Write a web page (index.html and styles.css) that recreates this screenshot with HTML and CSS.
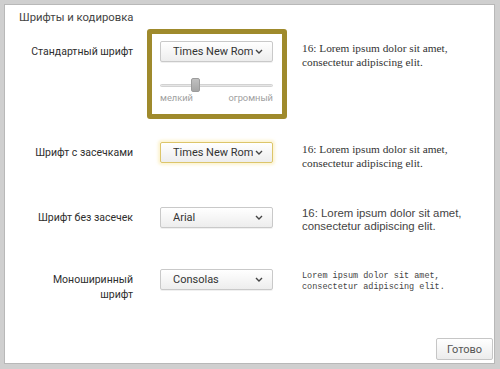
FILE: index.html
```html
<!DOCTYPE html>
<html lang="ru">
<head>
<meta charset="utf-8">
<title>Шрифты и кодировка</title>
<link rel="stylesheet" href="styles.css">
</head>
<body>
<div class="dialog">
  <div class="scroll">
    <div class="title">Шрифты и кодировка</div>
    <div class="rows">
      <div class="row row-main">
        <div class="label">Стандартный шрифт</div>
        <div class="control">
          <div class="select"><span class="value">Times New Roman</span><svg class="chev" width="8" height="5" viewBox="0 0 8 5"><polyline points="1,1 4,4 7,1" fill="none" stroke="#444" stroke-width="1.4"/></svg></div>
          <div class="slider"><div class="track"></div><div class="thumb"></div></div>
          <div class="slider-labels"><span>мелкий</span><span>огромный</span></div>
          <div class="highlight"></div>
        </div>
        <div class="sample serif">16: Lorem ipsum dolor sit amet, consectetur adipiscing elit.</div>
      </div>
      <div class="row">
        <div class="label">Шрифт с засечками</div>
        <div class="control">
          <div class="select focused"><span class="value">Times New Roman</span><svg class="chev" width="8" height="5" viewBox="0 0 8 5"><polyline points="1,1 4,4 7,1" fill="none" stroke="#444" stroke-width="1.4"/></svg></div>
        </div>
        <div class="sample serif">16: Lorem ipsum dolor sit amet, consectetur adipiscing elit.</div>
      </div>
      <div class="row">
        <div class="label">Шрифт без засечек</div>
        <div class="control">
          <div class="select"><span class="value">Arial</span><svg class="chev" width="8" height="5" viewBox="0 0 8 5"><polyline points="1,1 4,4 7,1" fill="none" stroke="#444" stroke-width="1.4"/></svg></div>
        </div>
        <div class="sample sans">16: Lorem ipsum dolor sit amet, consectetur adipiscing elit.</div>
      </div>
      <div class="row">
        <div class="label">Моноширинный<br>шрифт</div>
        <div class="control">
          <div class="select"><span class="value">Consolas</span><svg class="chev" width="8" height="5" viewBox="0 0 8 5"><polyline points="1,1 4,4 7,1" fill="none" stroke="#444" stroke-width="1.4"/></svg></div>
        </div>
        <div class="sample mono">Lorem ipsum dolor sit amet, consectetur adipiscing elit.</div>
      </div>
      <div class="row ghost">
        <div class="ghost-label"><span class="g1"></span><span class="g2"></span></div>
        <div class="ghost-ctrl"><span class="g3"></span></div>
        <div class="ghost-sample"><span class="g4"></span></div>
      </div>
    </div>
  </div>
  <div class="footer">
    <button class="btn">Готово</button>
  </div>
</div>
</body>
</html>
```

FILE: styles.css
```css
html, body {
  margin: 0;
  padding: 0;
}
body {
  width: 500px;
  height: 369px;
  background: #cfcfcf;
  font-family: Roboto, "Noto Sans", sans-serif;
  color: #333;
  overflow: hidden;
}
.dialog {
  box-sizing: border-box;
  margin: 4px 5px 5px 4px;
  height: 360px;
  background: #fff;
  border: 1px solid #b8b8b8;
  display: flex;
  flex-direction: column;
}
.scroll {
  height: 314px;
  overflow: hidden;
  padding: 5px 0 0 14px;
}
.title {
  font-size: 11.3px;
  line-height: 16px;
  color: #444;
}
.rows {
  margin-top: 15px;
  display: flex;
  flex-direction: column;
  gap: 37px;
}
.row {
  display: grid;
  grid-template-columns: 114px 113px 1fr;
  column-gap: 27px;
  align-items: start;
}
.row > .sample {
  margin-left: 2px;
}
.label {
  text-align: right;
  font-size: 10.5px;
  line-height: 15px;
  padding-top: 3px;
  color: #2e2e2e;
}
.control {
  position: relative;
  display: flex;
  flex-direction: column;
}
.select {
  box-sizing: border-box;
  height: 21px;
  border: 1px solid #c9c9c9;
  border-radius: 2px;
  background: linear-gradient(#ffffff, #ededed);
  box-shadow: 0 1px 0 rgba(0,0,0,0.06);
  display: flex;
  align-items: center;
  justify-content: space-between;
  padding: 0 9px 0 12px;
  font-size: 11px;
  color: #333;
}
.select.focused {
  border-color: #dcc56a;
  box-shadow: 0 0 3px 2px rgba(245, 220, 120, 0.35);
}
.value {
  width: 80px;
  overflow: hidden;
  white-space: nowrap;
}
.chev {
  display: block;
  flex: none;
}
.slider {
  position: relative;
  height: 12px;
  margin-top: 17px;
}
.track {
  position: absolute;
  left: 0;
  right: 0;
  top: 5px;
  height: 3px;
  box-sizing: border-box;
  background: #e6e6e6;
  border: 1px solid #d2d2d2;
  border-radius: 2px;
}
.thumb {
  position: absolute;
  left: 31px;
  top: -1px;
  width: 9px;
  height: 14px;
  box-sizing: border-box;
  background: linear-gradient(#c0c0c0, #a6a6a6);
  border: 1px solid #9c9c9c;
  border-radius: 2px;
}
.slider-labels {
  display: flex;
  justify-content: space-between;
  font-size: 9.3px;
  line-height: 14px;
  color: #a0a0a0;
}
.highlight {
  position: absolute;
  left: -13px;
  top: -12px;
  right: -14px;
  bottom: -14px;
  border: 5px solid #9f8a2c;
  border-radius: 3px;
  pointer-events: none;
}
.sample {
  color: #333;
}
.serif {
  font-family: "Liberation Serif", "Times New Roman", serif;
  font-size: 11.3px;
  line-height: 14px;
}
.sans {
  font-family: "Liberation Sans", Arial, sans-serif;
  font-size: 11.4px;
  line-height: 12.5px;
  color: #444;
}
.mono {
  font-family: "Liberation Mono", "DejaVu Sans Mono", monospace;
  font-size: 8.5px;
  line-height: 11px;
  margin-top: 2px;
  color: #444;
}
.ghost {
  height: 6px;
}
.ghost-label, .ghost-ctrl, .ghost-sample {
  display: flex;
  padding-top: 3px;
}
.ghost span {
  display: block;
  height: 0;
  border-top: 1px dotted #d4d4d4;
}
.g1 { width: 12px; margin-left: -3px; }
.g2 { width: 6px; margin-left: 58px; }
.g3 { width: 8px; border-top-style: solid !important; }
.g4 { width: 112px; margin-left: -2px; border-top-style: dashed !important; }
.footer {
  flex: 1;
  display: flex;
  justify-content: flex-end;
  align-items: flex-end;
  padding: 0 1px 3px 0;
}
.btn {
  box-sizing: border-box;
  width: 57px;
  height: 22px;
  border: 1px solid #c6c6c6;
  border-radius: 2px;
  background: linear-gradient(#ffffff, #ececec);
  font-family: Roboto, "Noto Sans", sans-serif;
  font-size: 11px;
  color: #555;
  padding: 0;
}
```
